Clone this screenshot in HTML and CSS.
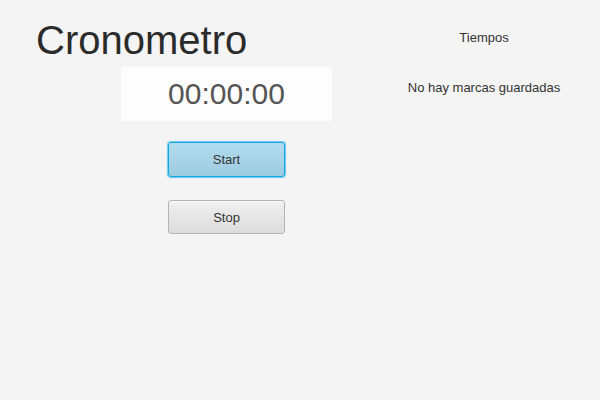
FILE: index.html
```html
<!DOCTYPE html>
<html lang="es">
<head>
<meta charset="utf-8">
<title>Cronometro</title>
<link rel="stylesheet" href="styles.css">
</head>
<body>
<div class="app">
  <main class="main">
    <h1 class="title">Cronometro</h1>
    <div class="stage">
      <div class="display">00:00:00</div>
      <button class="btn btn-start">Start</button>
      <button class="btn btn-stop">Stop</button>
    </div>
  </main>
  <aside class="side">
    <h2 class="side-title">Tiempos</h2>
    <p class="empty">No hay marcas guardadas</p>
  </aside>
</div>
</body>
</html>
```

FILE: styles.css
```css
html, body {
  margin: 0;
  padding: 0;
  background: #f4f4f4;
}
body {
  font-family: "Liberation Sans", Arial, sans-serif;
  color: #333;
  width: 600px;
  height: 400px;
}
.app {
  display: flex;
}
.main {
  width: 368px;
}
.title {
  margin: 17px 0 0 36px;
  font-size: 40px;
  line-height: 46px;
  font-weight: normal;
  color: #2b2b2b;
}
.stage {
  margin: 4px 0 0 121px;
  width: 211px;
  display: flex;
  flex-direction: column;
  align-items: center;
}
.display {
  box-sizing: border-box;
  width: 211px;
  height: 54px;
  background: #fdfdfd;
  border-radius: 3px;
  font-size: 30px;
  line-height: 54px;
  text-align: center;
  color: #555;
}
.btn {
  box-sizing: border-box;
  width: 117px;
  height: 35px;
  margin: 0;
  padding: 0;
  font-family: "Liberation Sans", Arial, sans-serif;
  font-size: 13px;
  color: #333;
  border-radius: 3px;
  cursor: pointer;
}
.btn-start {
  margin-top: 21px;
  border: 1px solid #12a6e2;
  background: linear-gradient(#b2dcee, #9ccbe0);
  box-shadow: 0 0 1px 1px rgba(20, 170, 230, 0.6);
}
.btn-stop {
  margin-top: 23px;
  height: 34px;
  border: 1px solid #b4b4b4;
  background: linear-gradient(#f0f0f0, #dcdcdc);
  box-shadow: inset 0 1px 0 #fafafa;
}
.side {
  flex: 1;
  text-align: center;
}
.side-title {
  margin: 29px 0 0;
  font-size: 13px;
  line-height: 17px;
  font-weight: normal;
  color: #333;
}
.empty {
  margin: 33px 0 0;
  font-size: 13px;
  line-height: 17px;
  color: #333;
}
```
